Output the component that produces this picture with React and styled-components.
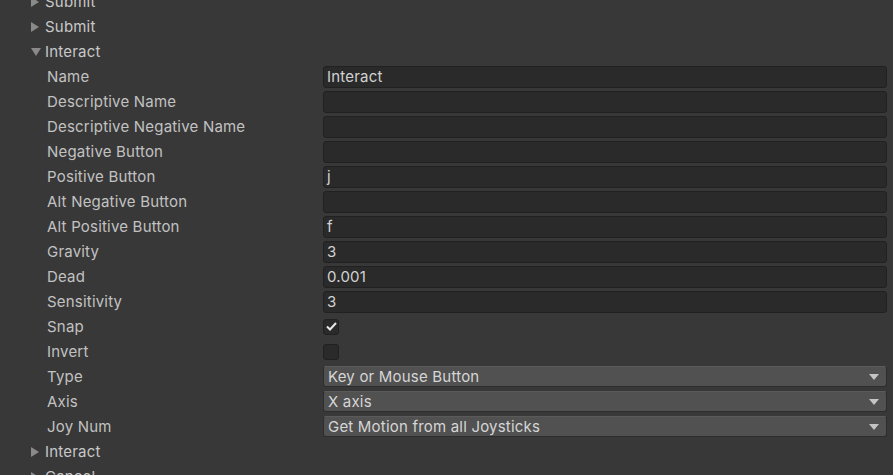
import React from 'react'
import styled, { createGlobalStyle } from 'styled-components'

const GlobalStyle = createGlobalStyle`
  html, body {
    margin: 0;
    padding: 0;
    background: #383838;
    overflow: hidden;
  }
  body {
    font-family: Inter, "Noto Sans", sans-serif;
  }
`

const Panel = styled.div`
  width: 893px;
  height: 475px;
  overflow: hidden;
  background: #383838;
`

const List = styled.div`
  margin-top: -11px;
  display: flex;
  flex-direction: column;
`

const Row = styled.div`
  height: 25px;
  display: flex;
  align-items: center;
  padding-left: ${p => (p.$foldout ? '31px' : '47px')};
  padding-right: 6px;
  font-size: 15px;
  letter-spacing: 0.2px;
`

const Arrow = styled.span`
  width: 14px;
  display: flex;
  align-items: center;
  svg {
    display: block;
  }
`

const FoldLabel = styled.span`
  color: #c8c8c8;
`

const Label = styled.span`
  width: 276px;
  flex: none;
  color: #c2c2c2;
`

const TextField = styled.div`
  flex: 1;
  height: 22px;
  box-sizing: border-box;
  background: #2a2a2a;
  border: 1px solid #212121;
  border-radius: 3px;
  padding-left: 3px;
  display: flex;
  align-items: center;
  color: #d2d2d2;
`

const Check = styled.div`
  width: 16px;
  height: 16px;
  box-sizing: border-box;
  background: #2a2a2a;
  border: 1px solid #212121;
  border-radius: 3px;
  display: flex;
  align-items: center;
  justify-content: center;
`

const Dropdown = styled.div`
  flex: 1;
  height: 21px;
  box-sizing: border-box;
  background: #515151;
  border: 1px solid #2d2d2d;
  border-top-color: #5a5a5a;
  border-radius: 3px;
  padding-left: 4px;
  padding-right: 7px;
  display: flex;
  align-items: center;
  justify-content: space-between;
  color: #d6d6d6;
`

const Caret = () => (
  <svg width="10" height="6" viewBox="0 0 10 6">
    <polygon points="0,0 10,0 5,6" fill="#c4c4c4" />
  </svg>
)

const Tri = ({ open }) => (
  <Arrow>
    {open ? (
      <svg width="10" height="8" viewBox="0 0 10 8">
        <polygon points="0,0 10,0 5,8" fill="#8a8a8a" />
      </svg>
    ) : (
      <svg width="8" height="10" viewBox="0 0 8 10">
        <polygon points="0,0 8,5 0,10" fill="#8a8a8a" />
      </svg>
    )}
  </Arrow>
)

const fields = [
  ['Name', 'text', 'Interact'],
  ['Descriptive Name', 'text', ''],
  ['Descriptive Negative Name', 'text', ''],
  ['Negative Button', 'text', ''],
  ['Positive Button', 'text', 'j'],
  ['Alt Negative Button', 'text', ''],
  ['Alt Positive Button', 'text', 'f'],
  ['Gravity', 'text', '3'],
  ['Dead', 'text', '0.001'],
  ['Sensitivity', 'text', '3'],
  ['Snap', 'check', true],
  ['Invert', 'check', false],
  ['Type', 'select', 'Key or Mouse Button'],
  ['Axis', 'select', 'X axis'],
  ['Joy Num', 'select', 'Get Motion from all Joysticks'],
]

const Foldout = ({ label, open }) => (
  <Row $foldout>
    <Tri open={open} />
    <FoldLabel>{label}</FoldLabel>
  </Row>
)

const Field = ({ label, kind, value }) => (
  <Row>
    <Label>{label}</Label>
    {kind === 'text' && <TextField>{value}</TextField>}
    {kind === 'check' && (
      <Check>
        {value && (
          <svg width="11" height="9" viewBox="0 0 11 9">
            <path d="M1 4.5 L4 7.5 L10 1" stroke="#e8e8e8" strokeWidth="2" fill="none" />
          </svg>
        )}
      </Check>
    )}
    {kind === 'select' && (
      <Dropdown>
        <span>{value}</span>
        <Caret />
      </Dropdown>
    )}
  </Row>
)

export default function App() {
  return (
    <Panel>
      <GlobalStyle />
      <List>
        <Foldout label="Submit" />
        <Foldout label="Submit" />
        <Foldout label="Interact" open />
        {fields.map(([label, kind, value]) => (
          <Field key={label} label={label} kind={kind} value={value} />
        ))}
        <Foldout label="Interact" />
        <Foldout label="Cancel" />
      </List>
    </Panel>
  )
}
